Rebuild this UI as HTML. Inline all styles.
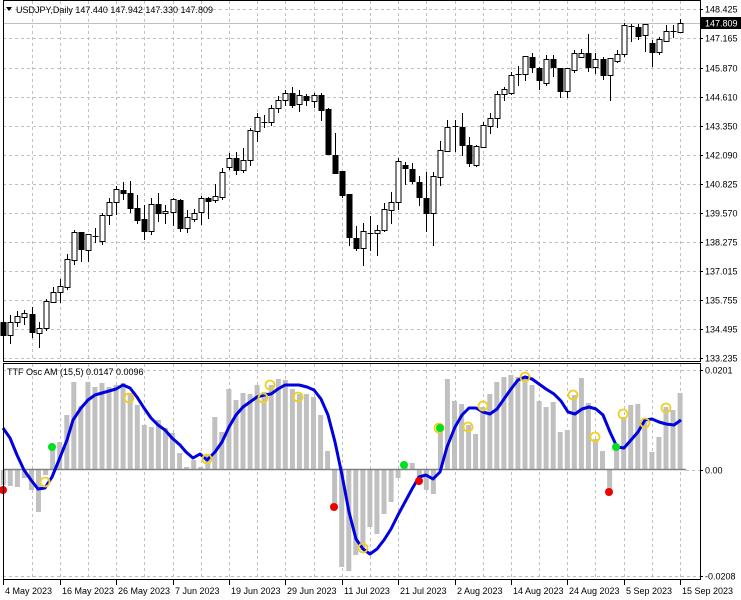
<!DOCTYPE html>
<html><head><meta charset="utf-8"><style>
html,body{margin:0;padding:0;background:#fff;}
svg{display:block;font-family:"Liberation Sans",Tahoma,sans-serif;font-size:9px;}
</style></head><body>
<svg id="s" width="741" height="600" xmlns="http://www.w3.org/2000/svg"></svg>
<script>
var C=[[0,322,335,318,340],[1,335,322,315,344],[1,322,316,311,327],[1,317,313,310,325],[0,314,332,307,338],[1,333,328,322,348],[1,328,301,299,331],[1,302,292,287,303],[1,292,286,279,303],[1,287,259,254,290],[1,260,232,230,265],[0,232,249,232,262],[1,250,234,234,262],[2,236,236,228,243],[1,241,215,213,245],[1,215,202,198,225],[1,202,189,186,215],[0,190,193,182,200],[0,193,208,181,213],[0,208,220,195,224],[0,219,231,205,240],[1,231,204,198,235],[0,204,213,193,222],[1,213,211,205,224],[1,212,199,198,226],[0,200,228,199,232],[1,228,217,210,233],[1,219,213,209,222],[1,212,198,196,225],[0,198,201,197,219],[1,200,196,184,203],[1,197,172,168,200],[1,167,158,153,170],[0,158,170,152,175],[1,170,160,148,173],[1,160,130,128,166],[1,131,117,113,142],[2,122,122,115,128],[1,122,108,105,126],[1,108,100,96,113],[1,100,93,90,106],[0,93,105,87,108],[1,104,95,90,112],[0,96,100,94,106],[1,101,95,93,108],[0,95,110,93,121],[0,109,154,108,155],[0,155,173,133,173],[0,171,195,171,198],[0,194,237,194,246],[0,238,248,226,251],[1,248,231,223,266],[2,233,233,216,251],[1,233,230,225,256],[1,230,209,203,232],[1,210,202,192,224],[1,202,161,158,210],[0,165,168,162,185],[0,169,181,163,184],[0,182,197,176,206],[0,198,213,172,232],[1,213,176,172,246],[1,177,150,141,186],[1,151,127,120,152],[2,126,126,120,152],[0,127,145,113,156],[0,145,163,137,167],[1,165,146,145,167],[1,147,125,122,148],[1,126,118,113,134],[1,118,94,91,128],[1,94,89,87,101],[1,93,75,72,95],[2,74,74,66,86],[1,74,56,56,81],[0,57,67,53,73],[0,68,80,67,90],[1,83,59,55,86],[0,59,67,55,77],[0,68,91,68,98],[1,91,68,68,98],[1,70,53,50,73],[1,57,53,49,58],[0,53,67,34,72],[1,67,59,53,74],[0,59,75,57,80],[1,75,58,58,101],[1,61,54,50,63],[1,54,25,23,57],[2,26,26,24,42],[0,27,36,24,40],[1,35,24,24,52],[0,43,52,40,67],[1,52,39,37,55],[1,41,31,25,42],[2,31,31,25,38],[1,32,23,19,33]];
var H=[485,486,487,478,490,512,475,448,442,415,382,406,382,387,383,387,385,383,393,405,425,427,420,428,433,453,467,460,467,455,417,432,389,400,393,394,385,392,385,379,380,389,394,394,397,415,451,505,567,571,555,550,527,534,514,502,478,465,463,484,490,494,429,379,401,404,425,434,407,394,382,377,375,377,377,385,401,407,402,432,430,395,378,403,439,451,490,447,417,405,404,422,452,437,407,410,393];
var L=[[3,428],[10,438],[17,455],[24,470],[31,480],[38,489],[45,488],[52,477],[59,460],[67,440],[73,420],[81,408],[88,400],[95,395],[102,393],[109,391],[116,389],[123,385],[130,388],[137,397],[144,408],[151,418],[158,425],[165,430],[172,438],[180,445],[186,452],[193,458],[200,454],[207,460],[215,452],[222,442],[229,427],[236,415],[243,407],[250,402],[257,397],[264,395],[271,394],[278,389],[285,385],[292,385],[299,385],[307,387],[314,390],[321,399],[328,415],[335,442],[342,475],[349,512],[356,539],[363,549],[370,554],[377,549],[384,540],[391,529],[398,515],[405,502],[412,489],[419,477],[426,475],[433,479],[440,472],[447,447],[455,427],[462,415],[469,408],[476,408],[483,412],[490,414],[497,409],[504,399],[511,389],[518,380],[525,377],[532,379],[539,384],[546,389],[554,394],[561,401],[568,412],[575,414],[582,409],[589,407],[596,409],[603,415],[610,432],[617,447],[624,448],[631,440],[638,432],[645,420],[652,419],[659,422],[666,424],[674,425],[681,420]];
var Y=[[45,482],[129,398],[207,459],[263,398],[270,385],[298,397],[363,548],[439,428],[468,427],[483,406],[525,377],[573,395],[595,437],[623,414],[645,423],[666,408]];
var G=[[52,447],[404,465],[440,428],[616,447]];
var R=[[3,490],[334,507],[419,481],[609,492]];
var o='';
function bx(i){return 3.3+7.05*i;}
var pt=[[9,'148.425'],[38,'147.165'],[68,'145.870'],[97,'144.610'],[126,'143.350'],[155,'142.090'],[184,'140.825'],[213,'139.570'],[242,'138.275'],[271,'137.015'],[300,'135.755'],[329,'134.495'],[358,'133.235']];
pt.forEach(function(p){o+='<line x1="3" x2="700" y1="'+p[0]+'.5" y2="'+p[0]+'.5" stroke="#c0c0c0" stroke-dasharray="3,3"/>';
o+='<line x1="700" x2="703" y1="'+p[0]+'.5" y2="'+p[0]+'.5" stroke="#000"/><text x="705" y="'+(p[0]+3.5)+'">'+p[1]+'</text>';});
[370,576].forEach(function(y){o+='<line x1="3" x2="700" y1="'+y+'.5" y2="'+y+'.5" stroke="#c0c0c0" stroke-dasharray="3,3"/>';});
for(var i=4;i<97;i+=4){var x=Math.round(bx(i))+.5;o+='<line x1="'+x+'" x2="'+x+'" y1="1" y2="361" stroke="#c0c0c0" stroke-dasharray="3,3"/><line x1="'+x+'" x2="'+x+'" y1="364" y2="580" stroke="#c0c0c0" stroke-dasharray="3,3"/>';}
var dl=['4 May 2023','16 May 2023','26 May 2023','7 Jun 2023','19 Jun 2023','29 Jun 2023','11 Jul 2023','21 Jul 2023','2 Aug 2023','14 Aug 2023','24 Aug 2023','5 Sep 2023','15 Sep 2023'];
dl.forEach(function(d,k){var x=Math.round(bx(k*8))+.5;o+='<line x1="'+x+'" x2="'+x+'" y1="580" y2="585" stroke="#000"/><text x="'+(x+1.5)+'" y="594">'+d+'</text>';});
o+='<line x1="3" x2="700" y1="23.5" y2="23.5" stroke="#c0c0c0"/>';
C.forEach(function(c,i){var x=Math.round(bx(i))+.5;
o+='<line x1="'+x+'" x2="'+x+'" y1="'+c[3]+'" y2="'+c[4]+'" stroke="#000"/>';
var t=Math.min(c[1],c[2]),b=Math.max(c[1],c[2]);
if(c[0]==2){o+='<line x1="'+(x-3)+'" x2="'+(x+3)+'" y1="'+(t+.5)+'" y2="'+(t+.5)+'" stroke="#000"/>';}
else o+='<rect x="'+(x-2.5)+'" y="'+(t+.5)+'" width="5" height="'+Math.max(b-t,1)+'" fill="'+(c[0]?'#fff':'#000')+'" stroke="#000"/>';});
H.forEach(function(h,i){var x=bx(i)-2.5;var t=Math.min(h,470),b=Math.max(h,470);o+='<rect x="'+x.toFixed(1)+'" y="'+t+'" width="5" height="'+(b-t)+'" fill="#c0c0c0"/>';});
o+='<line x1="3" x2="686" y1="469.5" y2="469.5" stroke="#808080" stroke-width="1.5"/>';
o+='<line x1="686" x2="700" y1="470.5" y2="470.5" stroke="#c0c0c0" stroke-dasharray="3,3"/>';
o+='<polyline fill="none" stroke="#0000e0" stroke-width="3" stroke-linejoin="round" points="'+L.map(function(p){return p.join(',')}).join(' ')+'"/>';
Y.forEach(function(p){o+='<circle cx="'+p[0]+'" cy="'+p[1]+'" r="4.5" fill="none" stroke="#f0d020" stroke-width="1.8"/>';});
G.forEach(function(p){o+='<circle cx="'+p[0]+'" cy="'+p[1]+'" r="4" fill="#00e020"/>';});
R.forEach(function(p){o+='<circle cx="'+p[0]+'" cy="'+p[1]+'" r="4" fill="#f00000"/>';});
o+='<rect x="3.5" y="0.5" width="697" height="361" fill="none" stroke="#000"/>';
o+='<rect x="3.5" y="363.5" width="697" height="216" fill="none" stroke="#000"/>';
o+='<rect x="701" y="17" width="40" height="12" fill="#000"/><text x="705" y="26.5" fill="#fff">147.809</text>';
[[370,'0.0201'],[470,'0.00'],[576,'-0.0208']].forEach(function(p){o+='<line x1="700" x2="703" y1="'+p[0]+'.5" y2="'+p[0]+'.5" stroke="#000"/><text x="705" y="'+(p[0]+3.5)+'">'+p[1]+'</text>';});
o+='<path d="M6,7 L12,7 L9,11 Z" fill="#000"/><text x="16" y="13">USDJPY,Daily  147.440 147.942 147.330 147.809</text>';
o+='<text x="7" y="375">TTF Osc AM (15,5) 0.0147 0.0096</text>';
document.getElementById('s').innerHTML=o;
</script>
</body></html>
